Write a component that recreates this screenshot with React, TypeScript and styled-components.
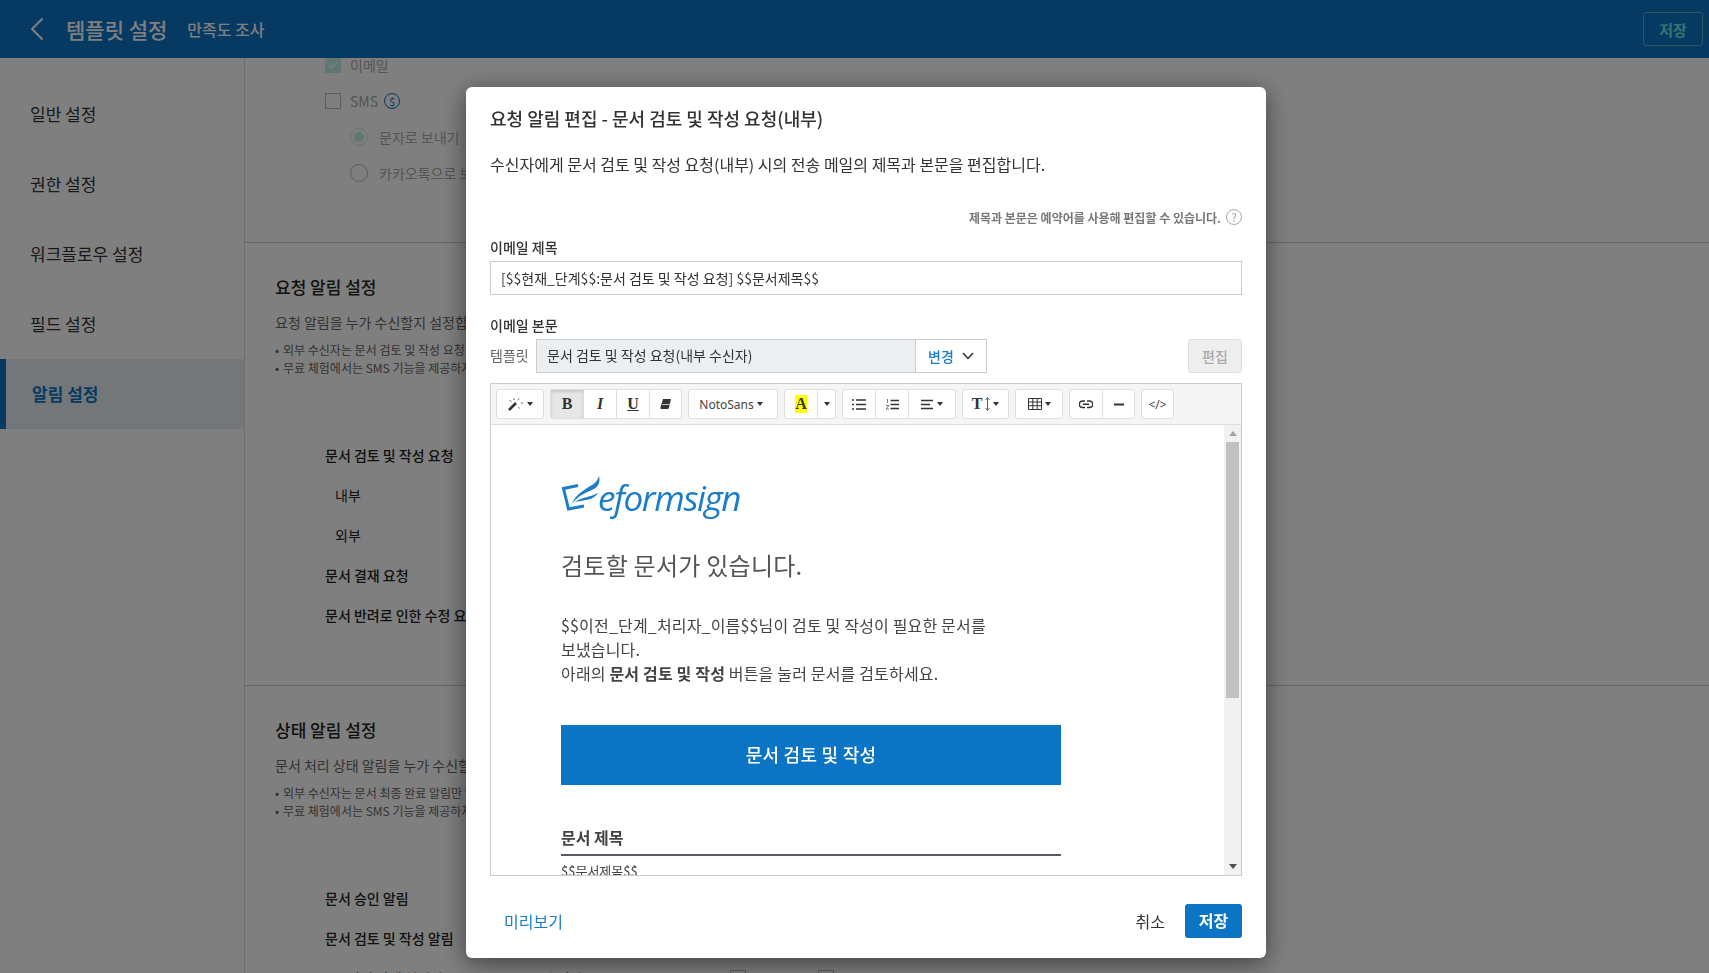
import React from 'react'
import styled, { createGlobalStyle } from 'styled-components'

const GlobalStyle = createGlobalStyle`
  html, body {
    margin: 0;
    padding: 0;
    height: 100%;
    overflow: hidden;
    background: #fff;
  }
  * { box-sizing: border-box; }
  body {
    font-family: "Noto Sans CJK KR", "Noto Sans", sans-serif;
    color: #333;
  }
`

const Page = styled.div`
  height: 100vh;
  display: flex;
  flex-direction: column;
  overflow: hidden;
`

const TopBar = styled.header`
  flex: none;
  height: 58px;
  background: #0c74c4;
  display: flex;
  align-items: center;
  padding: 0 6px 0 30px;
  color: #fff;
`

const BackIcon = styled.svg`
  width: 14px;
  height: 24px;
  margin-right: 22px;
`

const TopTitle = styled.h1`
  margin: 0;
  font-size: 21px;
  font-weight: 500;
  line-height: 30px;
`

const TopSub = styled.span`
  margin-left: 20px;
  font-size: 16px;
  font-weight: 500;
  flex: 1;
`

const TopSave = styled.button`
  width: 60px;
  height: 34px;
  background: transparent;
  border: 1px solid #4fb4c0;
  border-radius: 3px;
  color: #6fe8e0;
  font: 700 15px "Noto Sans CJK KR", sans-serif;
`

const Body = styled.div`
  flex: 1;
  display: flex;
  min-height: 0;
`

const Sidebar = styled.nav`
  flex: none;
  width: 245px;
  padding-top: 21px;
  border-right: 1px solid #ddd;
`

const NavItem = styled.div<{ $active?: boolean }>`
  height: 70px;
  padding-bottom: 2px;
  display: flex;
  align-items: center;
  font-size: 17px;
  padding-left: ${p => (p.$active ? '26px' : '30px')};
  color: ${p => (p.$active ? '#0c74c4' : '#333')};
  font-weight: ${p => (p.$active ? 700 : 400)};
  background: ${p => (p.$active ? '#e9eff5' : 'transparent')};
  border-left: ${p => (p.$active ? '6px solid #0c74c4' : '0')};
`

const Main = styled.main`
  flex: 1;
  overflow: hidden;
  min-width: 0;
`

const TopSection = styled.section`
  margin-top: -11px;
  padding: 0 0 51px 80px;
  border-bottom: 1px solid #ccc;
`

const OptionRow = styled.div<{ $sub?: boolean }>`
  height: 36px;
  display: flex;
  align-items: center;
  gap: 9px;
  font-size: 14px;
  color: #aaa;
  white-space: nowrap;
  padding-left: ${p => (p.$sub ? '25px' : '0')};
`

const Check = styled.span<{ $on?: boolean }>`
  flex: none;
  width: 16px;
  height: 16px;
  border: 1px solid ${p => (p.$on ? '#c0f0e8' : '#bbb')};
  background: ${p => (p.$on ? '#c0f0e8' : '#fff')};
  display: flex;
  align-items: center;
  justify-content: center;
`

const Radio = styled.span<{ $on?: boolean }>`
  flex: none;
  width: 18px;
  height: 18px;
  margin-right: 2px;
  border-radius: 50%;
  border: 1px solid ${p => (p.$on ? '#c0f0e8' : '#bbb')};
  display: flex;
  align-items: center;
  justify-content: center;
  &::after {
    content: '';
    display: ${p => (p.$on ? 'block' : 'none')};
    width: 10px;
    height: 10px;
    border-radius: 50%;
    background: #c0f0e8;
  }
`

const CoinBadge = styled.span`
  width: 16px;
  height: 16px;
  margin-left: -3px;
  border: 1px solid #0c74c4;
  border-radius: 50%;
  color: #0c74c4;
  font-size: 11px;
  line-height: 14px;
  text-align: center;
`

const Section = styled.section<{ $last?: boolean }>`
  padding: 32px 0 ${p => (p.$last ? '0' : '50px')} 30px;
  border-bottom: ${p => (p.$last ? '0' : '1px solid #ccc')};
  white-space: nowrap;
`

const SectionTitle = styled.h2`
  margin: 0;
  font-size: 17px;
  line-height: 24px;
  font-weight: 500;
  color: #222;
`

const SectionDesc = styled.p`
  margin: 13px 0 9px;
  font-size: 14px;
  line-height: 20px;
  color: #666;
`

const Note = styled.div`
  font-size: 12px;
  line-height: 18px;
  color: #666;
  &::before {
    content: '•';
    display: inline-block;
    width: 8px;
  }
`

const NoticeRows = styled.div`
  margin-top: 58px;
  padding-left: 50px;
`

const NoticeRow = styled.div`
  height: 40px;
  display: grid;
  grid-template-columns: 219px 186px 88px 16px;
  align-items: center;
  font-size: 14px;
`

const NoticeLabel = styled.span<{ $indent?: number; $plain?: boolean }>`
  padding-left: ${p => p.$indent || 0}px;
  font-weight: ${p => (p.$plain ? 400 : 500)};
  color: #222;
`

const Overlay = styled.div`
  position: fixed;
  inset: 0;
  background: rgba(0, 0, 0, 0.5);
`

const Dialog = styled.div`
  position: fixed;
  left: 466px;
  top: 87px;
  width: 800px;
  height: 871px;
  padding: 19px 24px 0;
  background: #fff;
  border-radius: 6px;
  box-shadow: 0 5px 24px rgba(0, 0, 0, 0.5);
`

const DialogTitle = styled.h3`
  margin: 0;
  font-size: 18px;
  font-weight: 500;
  line-height: 24px;
  color: #333;
`

const DialogDesc = styled.p`
  margin: 22px 0 0;
  font-size: 16px;
  line-height: 24px;
  color: #333;
`

const Hint = styled.div`
  margin-top: 32px;
  height: 18px;
  display: flex;
  justify-content: flex-end;
  align-items: center;
  gap: 5px;
  font-size: 12px;
  font-weight: 700;
  color: #777;
`

const HelpIcon = styled.span`
  width: 16px;
  height: 16px;
  border: 1px solid #aaa;
  border-radius: 50%;
  color: #999;
  font-size: 11px;
  font-weight: 400;
  line-height: 14px;
  text-align: center;
`

const FieldLabel = styled.div<{ $top: number }>`
  margin-top: ${p => p.$top}px;
  margin-bottom: 4px;
  font-size: 14px;
  line-height: 20px;
  font-weight: 500;
  color: #333;
`

const TextInput = styled.div`
  height: 34px;
  padding: 0 10px;
  border: 1px solid #ccc;
  font-size: 14px;
  line-height: 32px;
  color: #333;
`

const TemplateRow = styled.div`
  height: 34px;
  display: flex;
  align-items: stretch;
  font-size: 14px;
`

const TemplateLabel = styled.span`
  width: 46px;
  line-height: 33px;
  color: #666;
`

const TemplateValue = styled.div`
  width: 379px;
  padding: 0 10px;
  line-height: 31px;
  background: #eceff1;
  border: 1px solid #ccc;
  border-right: 0;
  color: #333;
`

const ChangeButton = styled.button`
  width: 72px;
  padding: 0;
  display: flex;
  align-items: center;
  justify-content: center;
  gap: 8px;
  background: #fff;
  border: 1px solid #ccc;
  color: #1a7fd0;
  font: 500 14px "Noto Sans CJK KR", sans-serif;
`

const EditButton = styled.button`
  margin-left: auto;
  width: 54px;
  background: #eee;
  border: 1px solid #ddd;
  border-radius: 3px;
  color: #aaa;
  font: 500 14px "Noto Sans CJK KR", sans-serif;
`

const Editor = styled.div`
  margin-top: 10px;
  height: 493px;
  border: 1px solid #ccc;
  display: flex;
  flex-direction: column;
`

const Toolbar = styled.div`
  flex: none;
  height: 41px;
  padding: 5px 5px 0;
  display: flex;
  gap: 6px;
  background: #f5f5f5;
  border-bottom: 1px solid #ddd;
`

const ToolGroup = styled.div`
  display: flex;
  height: 30px;
  background: #fff;
  border: 1px solid #ddd;
  border-radius: 3px;
`

const ToolButton = styled.div<{ $w: number; $active?: boolean }>`
  width: ${p => p.$w}px;
  display: flex;
  align-items: center;
  justify-content: center;
  gap: 3px;
  color: #333;
  background: ${p => (p.$active ? '#e6e6e6' : 'transparent')};
  box-shadow: ${p => (p.$active ? 'inset 0 2px 3px rgba(0,0,0,.13)' : 'none')};
  & + & { border-left: 1px solid #ddd; }
`

const SerifGlyph = styled.span<{ $italic?: boolean; $under?: boolean }>`
  font: ${p => (p.$italic ? 'italic' : 'normal')} 700 16px "Liberation Serif", serif;
  text-decoration: ${p => (p.$under ? 'underline' : 'none')};
`

const ColorGlyph = styled.span`
  width: 12px;
  height: 18px;
  background: #ff0;
  font: 700 16px/18px "Liberation Serif", serif;
  text-align: center;
`

const BigT = styled.span`
  font: 700 16px "Liberation Serif", serif;
`

const FontName = styled.span`
  margin-left: -4px;
  font: 12px "Noto Sans", sans-serif;
  color: #444;
`

const CodeGlyph = styled.span`
  font: 12px "Noto Sans", sans-serif;
  color: #444;
`

const Caret = styled.span`
  width: 0;
  height: 0;
  border-left: 3px solid transparent;
  border-right: 3px solid transparent;
  border-top: 4px solid #333;
`

const EditorBody = styled.div`
  flex: 1;
  min-height: 0;
  display: flex;
`

const EmailView = styled.div`
  flex: 1;
  overflow: hidden;
  padding: 50px 0 0 70px;
`

const EmailColumn = styled.div`
  width: 500px;
`

const Logo = styled.div`
  height: 43px;
  display: flex;
  align-items: flex-start;
`

const Wordmark = styled.span`
  margin: 4px 0 0 -3px;
  font: italic 400 35px/38px "Open Sans", sans-serif;
  letter-spacing: -1.4px;
  color: #1b7cc9;
`

const EmailHeading = styled.div`
  margin-top: 30px;
  font-size: 24px;
  line-height: 34px;
  letter-spacing: 0.25px;
  color: #555;
`

const EmailText = styled.p`
  margin: 31px 0 0;
  font-size: 16px;
  line-height: 24px;
  letter-spacing: 0.17px;
  white-space: nowrap;
  color: #444;
`

const EmailButton = styled.div`
  margin-top: 40px;
  height: 60px;
  background: #0c74c4;
  color: #fff;
  font-size: 18px;
  font-weight: 500;
  line-height: 58px;
  letter-spacing: 0.25px;
  text-align: center;
`

const EmailLabel = styled.div`
  margin-top: 41px;
  padding-bottom: 6px;
  border-bottom: 2px solid #555a66;
  font-size: 16px;
  line-height: 22px;
  font-weight: 700;
  color: #444;
`

const EmailValue = styled.div`
  margin-top: 5px;
  font-size: 13px;
  line-height: 20px;
  color: #444;
`

const Scrollbar = styled.div`
  flex: none;
  width: 17px;
  background: #f1f1f1;
  display: flex;
  flex-direction: column;
  align-items: center;
`

const ScrollArrow = styled.span<{ $up?: boolean }>`
  flex: none;
  margin: 6px 0;
  width: 0;
  height: 0;
  border-left: 4px solid transparent;
  border-right: 4px solid transparent;
  border-top: ${p => (p.$up ? '0' : '5px solid #505050')};
  border-bottom: ${p => (p.$up ? '5px solid #a3a3a3' : '0')};
`

const ScrollThumb = styled.div`
  width: 13px;
  height: 256px;
  background: #c1c1c1;
`

const ScrollTrack = styled.div`
  flex: 1;
`

const DialogFooter = styled.div`
  margin-top: 28px;
  height: 34px;
  display: flex;
  align-items: center;
  padding-left: 14px;
  font-size: 16px;
  line-height: 32px;
`

const PreviewLink = styled.span`
  flex: 1;
  color: #1a7fd0;
`

const CancelLink = styled.span`
  margin-right: 20px;
  color: #333;
`

const SaveButton = styled.button`
  width: 57px;
  height: 34px;
  padding: 0 0 2px;
  background: #0c74c4;
  border: 0;
  border-radius: 3px;
  color: #fff;
  font: 700 16px "Noto Sans CJK KR", sans-serif;
`

const WandIcon = () => (
  <svg width="16" height="14" viewBox="0 0 16 14">
    <path d="M1 13 L8 6" stroke="#333" strokeWidth="2.6" />
    <path d="M6 1v2M11 1.5l-1 1.6M1.5 3.5l2 1M13 6h2M10.5 10l1 1.5" stroke="#666" strokeWidth="1" />
  </svg>
)

const EraserIcon = () => (
  <svg width="13" height="12" viewBox="0 0 13 12">
    <path d="M4 1 H12 L10 9.5 Q9.8 11 8.5 11 H2.5 Q1 11 1.4 9.5 Z" fill="#333" />
    <path d="M3 6.5 H11" stroke="#fff" strokeWidth="0.7" />
  </svg>
)

const ListIcon = () => (
  <svg width="14" height="11" viewBox="0 0 14 11">
    <path d="M0 1h2M0 5.5h2M0 10h2M4 1h10M4 5.5h10M4 10h10" stroke="#333" strokeWidth="1.7" />
  </svg>
)

const OrderedIcon = () => (
  <svg width="13" height="11" viewBox="0 0 13 11">
    <path d="M4.5 1.5h8.5M4.5 5.5h8.5M4.5 9.5h8.5" stroke="#333" strokeWidth="1.7" />
    <path d="M1.5 0v4M0 6.5h3L0 10h3" stroke="#555" strokeWidth="0.8" fill="none" />
  </svg>
)

const AlignIcon = () => (
  <svg width="13" height="11" viewBox="0 0 13 11">
    <path d="M0 1.5h12M0 5.5h9M0 9.5h12" stroke="#333" strokeWidth="1.7" />
  </svg>
)

const HeightIcon = () => (
  <svg width="5" height="14" viewBox="0 0 5 14">
    <path d="M2.5 1v12M0.5 3l2-2.5 2 2.5M0.5 11l2 2.5 2-2.5" stroke="#555" strokeWidth="0.9" fill="none" />
  </svg>
)

const TableIcon = () => (
  <svg width="14" height="12" viewBox="0 0 14 12">
    <path d="M0.5 0.5h13v11h-13zM0.5 4h13M0.5 7.7h13M4.8 0.5v11M9.2 0.5v11" stroke="#333" fill="none" />
  </svg>
)

const LinkIcon = () => (
  <svg width="14" height="9" viewBox="0 0 14 9">
    <path
      d="M6 1H3.5a3 3 0 0 0 0 6.500H6M8 1h2.500a3 3 0 0 1 0 6.500H8M4 4.300h6"
      stroke="#333"
      strokeWidth="1.500"
      fill="none"
    />
  </svg>
)

const RuleIcon = () => (
  <svg width="10" height="3" viewBox="0 0 10 3">
    <path d="M0 1.500h10" stroke="#333" strokeWidth="2" />
  </svg>
)

const LogoMark = () => (
  <svg width="40" height="43" viewBox="0 0 40 43">
    <path d="M17 10.500 L2.500 13.500 L7.500 34 L23 31" stroke="#1b7cc9" strokeWidth="3" fill="none" />
    <path d="M11 29 C14 20 24 14 31 10 C35 8 37 4 38 1 C40 8 36 13 31 15 C23 18 16 22 11 29 Z" fill="#1b7cc9" />
    <path d="M14 27 C21 22 30 22 37 18 C33 25 24 25 14 27 Z" fill="#1b7cc9" />
  </svg>
)

const App: React.FC = () => {
  return (
    <>
      <GlobalStyle />
      <Page>
        <TopBar>
          <BackIcon viewBox="0 0 14 24">
            <path d="M12.500 1.500 L2 12 L12.500 22.500" stroke="#fff" strokeWidth="2" fill="none" />
          </BackIcon>
          <TopTitle>템플릿 설정</TopTitle>
          <TopSub>만족도 조사</TopSub>
          <TopSave>저장</TopSave>
        </TopBar>
        <Body>
          <Sidebar>
            <NavItem>일반 설정</NavItem>
            <NavItem>권한 설정</NavItem>
            <NavItem>워크플로우 설정</NavItem>
            <NavItem>필드 설정</NavItem>
            <NavItem $active>알림 설정</NavItem>
          </Sidebar>
          <Main>
            <TopSection>
              <OptionRow>
                <Check $on>
                  <svg width="12" height="10" viewBox="0 0 12 10">
                    <path d="M1.500 5 L4.500 8 L10.500 1.500" stroke="#fff" strokeWidth="1.300" fill="none" />
                  </svg>
                </Check>
                이메일
              </OptionRow>
              <OptionRow>
                <Check />
                SMS
                <CoinBadge>$</CoinBadge>
              </OptionRow>
              <OptionRow $sub>
                <Radio $on />
                문자로 보내기
              </OptionRow>
              <OptionRow $sub>
                <Radio />
                카카오톡으로 보내기
              </OptionRow>
            </TopSection>
            <Section>
              <SectionTitle>요청 알림 설정</SectionTitle>
              <SectionDesc>요청 알림을 누가 수신할지 설정합니다.</SectionDesc>
              <Note>외부 수신자는 문서 검토 및 작성 요청 알림을 받습니다.</Note>
              <Note>무료 체험에서는 SMS 기능을 제공하지 않습니다.</Note>
              <NoticeRows>
                <NoticeRow>
                  <NoticeLabel>문서 검토 및 작성 요청</NoticeLabel>
                </NoticeRow>
                <NoticeRow>
                  <NoticeLabel $indent={10} $plain>내부</NoticeLabel>
                </NoticeRow>
                <NoticeRow>
                  <NoticeLabel $indent={10} $plain>외부</NoticeLabel>
                </NoticeRow>
                <NoticeRow>
                  <NoticeLabel>문서 결재 요청</NoticeLabel>
                </NoticeRow>
                <NoticeRow>
                  <NoticeLabel>문서 반려로 인한 수정 요청</NoticeLabel>
                </NoticeRow>
              </NoticeRows>
            </Section>
            <Section $last>
              <SectionTitle>상태 알림 설정</SectionTitle>
              <SectionDesc>문서 처리 상태 알림을 누가 수신할지 설정합니다.</SectionDesc>
              <Note>외부 수신자는 문서 최종 완료 알림만 받습니다.</Note>
              <Note>무료 체험에서는 SMS 기능을 제공하지 않습니다.</Note>
              <NoticeRows>
                <NoticeRow>
                  <NoticeLabel>문서 승인 알림</NoticeLabel>
                </NoticeRow>
                <NoticeRow>
                  <NoticeLabel>문서 검토 및 작성 알림</NoticeLabel>
                </NoticeRow>
                <NoticeRow>
                  <NoticeLabel $indent={22} $plain>이전 단계 처리자</NoticeLabel>
                  <NoticeLabel $plain>수신자</NoticeLabel>
                  <Check />
                  <Check />
                </NoticeRow>
              </NoticeRows>
            </Section>
          </Main>
        </Body>
      </Page>
      <Overlay />
      <Dialog>
        <DialogTitle>요청 알림 편집 - 문서 검토 및 작성 요청(내부)</DialogTitle>
        <DialogDesc>수신자에게 문서 검토 및 작성 요청(내부) 시의 전송 메일의 제목과 본문을 편집합니다.</DialogDesc>
        <Hint>
          제목과 본문은 예약어를 사용해 편집할 수 있습니다.
          <HelpIcon>?</HelpIcon>
        </Hint>
        <FieldLabel $top={11}>이메일 제목</FieldLabel>
        <TextInput>[$$현재_단계$$:문서 검토 및 작성 요청] $$문서제목$$</TextInput>
        <FieldLabel $top={20}>이메일 본문</FieldLabel>
        <TemplateRow>
          <TemplateLabel>템플릿</TemplateLabel>
          <TemplateValue>문서 검토 및 작성 요청(내부 수신자)</TemplateValue>
          <ChangeButton>
            변경
            <svg width="12" height="8" viewBox="0 0 12 8">
              <path d="M1 1 L6 6.500 L11 1" stroke="#222" strokeWidth="1.300" fill="none" />
            </svg>
          </ChangeButton>
          <EditButton>편집</EditButton>
        </TemplateRow>
        <Editor>
          <Toolbar>
            <ToolGroup>
              <ToolButton $w={46}>
                <WandIcon />
                <Caret />
              </ToolButton>
            </ToolGroup>
            <ToolGroup>
              <ToolButton $w={32} $active>
                <SerifGlyph>B</SerifGlyph>
              </ToolButton>
              <ToolButton $w={33}>
                <SerifGlyph $italic>I</SerifGlyph>
              </ToolButton>
              <ToolButton $w={33}>
                <SerifGlyph $under>U</SerifGlyph>
              </ToolButton>
              <ToolButton $w={32}>
                <EraserIcon />
              </ToolButton>
            </ToolGroup>
            <ToolGroup>
              <ToolButton $w={88}>
                <FontName>NotoSans</FontName>
                <Caret />
              </ToolButton>
            </ToolGroup>
            <ToolGroup>
              <ToolButton $w={32}>
                <ColorGlyph>A</ColorGlyph>
              </ToolButton>
              <ToolButton $w={18}>
                <Caret />
              </ToolButton>
            </ToolGroup>
            <ToolGroup>
              <ToolButton $w={32}>
                <ListIcon />
              </ToolButton>
              <ToolButton $w={33}>
                <OrderedIcon />
              </ToolButton>
              <ToolButton $w={47}>
                <AlignIcon />
                <Caret />
              </ToolButton>
            </ToolGroup>
            <ToolGroup>
              <ToolButton $w={45}>
                <BigT>T</BigT>
                <HeightIcon />
                <Caret />
              </ToolButton>
            </ToolGroup>
            <ToolGroup>
              <ToolButton $w={46}>
                <TableIcon />
                <Caret />
              </ToolButton>
            </ToolGroup>
            <ToolGroup>
              <ToolButton $w={32}>
                <LinkIcon />
              </ToolButton>
              <ToolButton $w={32}>
                <RuleIcon />
              </ToolButton>
            </ToolGroup>
            <ToolGroup>
              <ToolButton $w={31}>
                <CodeGlyph>&lt;/&gt;</CodeGlyph>
              </ToolButton>
            </ToolGroup>
          </Toolbar>
          <EditorBody>
            <EmailView>
              <EmailColumn>
                <Logo>
                  <LogoMark />
                  <Wordmark>eformsign</Wordmark>
                </Logo>
                <EmailHeading>검토할 문서가 있습니다.</EmailHeading>
                <EmailText>
                  $$이전_단계_처리자_이름$$님이 검토 및 작성이 필요한 문서를
                  <br />
                  보냈습니다.
                  <br />
                  아래의 <b>문서 검토 및 작성</b> 버튼을 눌러 문서를 검토하세요.
                </EmailText>
                <EmailButton>문서 검토 및 작성</EmailButton>
                <EmailLabel>문서 제목</EmailLabel>
                <EmailValue>$$문서제목$$</EmailValue>
              </EmailColumn>
            </EmailView>
            <Scrollbar>
              <ScrollArrow $up />
              <ScrollThumb />
              <ScrollTrack />
              <ScrollArrow />
            </Scrollbar>
          </EditorBody>
        </Editor>
        <DialogFooter>
          <PreviewLink>미리보기</PreviewLink>
          <CancelLink>취소</CancelLink>
          <SaveButton>저장</SaveButton>
        </DialogFooter>
      </Dialog>
    </>
  )
}

export default App
